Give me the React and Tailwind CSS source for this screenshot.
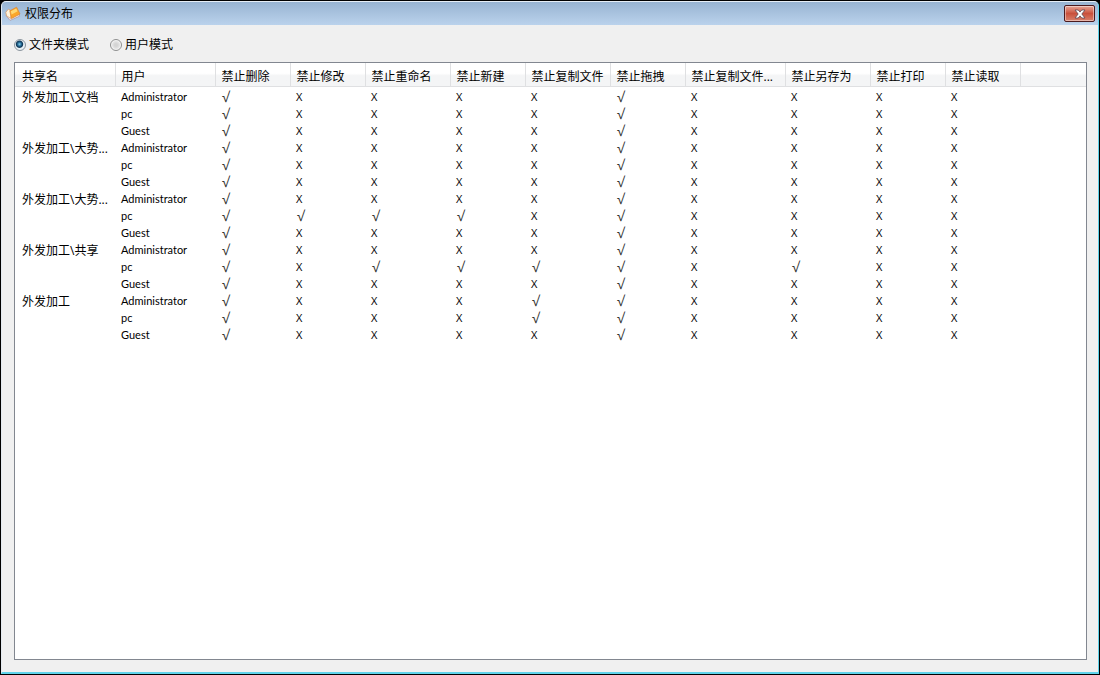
import { useState } from 'react';

const COLUMNS = [
  { label: '共享名', width: 'w-[100px]' },
  { label: '用户', width: 'w-[100px]' },
  { label: '禁止删除', width: 'w-[75px]' },
  { label: '禁止修改', width: 'w-[75px]' },
  { label: '禁止重命名', width: 'w-[85px]' },
  { label: '禁止新建', width: 'w-[75px]' },
  { label: '禁止复制文件', width: 'w-[85px]' },
  { label: '禁止拖拽', width: 'w-[75px]' },
  { label: '禁止复制文件...', width: 'w-[100px]' },
  { label: '禁止另存为', width: 'w-[85px]' },
  { label: '禁止打印', width: 'w-[75px]' },
  { label: '禁止读取', width: 'w-[75px]' },
];

// one flag per permission column, in header order
const ROWS = [
  ['外发加工\\文档', 'Administrator', '1000010000'],
  ['', 'pc', '1000010000'],
  ['', 'Guest', '1000010000'],
  ['外发加工\\大势...', 'Administrator', '1000010000'],
  ['', 'pc', '1000010000'],
  ['', 'Guest', '1000010000'],
  ['外发加工\\大势...', 'Administrator', '1000010000'],
  ['', 'pc', '1111010000'],
  ['', 'Guest', '1000010000'],
  ['外发加工\\共享', 'Administrator', '1000010000'],
  ['', 'pc', '1011110100'],
  ['', 'Guest', '1000010000'],
  ['外发加工', 'Administrator', '1000110000'],
  ['', 'pc', '1000110000'],
  ['', 'Guest', '1000010000'],
];

const MODES = [
  { id: 'folder', label: '文件夹模式' },
  { id: 'user', label: '用户模式' },
];

function AppIcon() {
  return (
    <svg className="w-4 h-4 shrink-0" viewBox="0 0 16 16" aria-hidden="true">
      <path d="M1 9.5 5 14.4 14.6 10.2 13 6Z" fill="#efe9ee" stroke="#a48f9c" strokeWidth=".7" />
      <path d="M.8 6.2 3.4 3.2 7 5.2 5.6 12.4 1.6 9.8Z" fill="#fff3dc" stroke="#d99a62" strokeWidth=".7" />
      <path d="M4.8 4.8 11.6 1.2 15 8 6.4 12.6Z" fill="#fba62a" stroke="#e0822a" strokeWidth=".7" />
      <path d="M5.8 5.2 11.2 2.4 12.6 5.2 6.6 8.4Z" fill="#ffd873" />
    </svg>
  );
}

function TitleBar({ title }) {
  return (
    <header className="flex items-start justify-between h-[23px] pl-[3px] pr-[3px] bg-linear-to-b from-[#98b4d2] to-[#bad2ec]">
      <div className="flex items-center gap-1 h-[23px]">
        <AppIcon />
        <h1 className="text-[12px] leading-4 text-black">{title}</h1>
      </div>
      <button
        type="button"
        aria-label="关闭"
        className="flex items-center justify-center w-[31px] h-[17px] mt-[3px] rounded-[2px] border border-[#4a1a1e] bg-linear-to-b from-[#e6a597] from-0% via-[#c9503c] via-50% to-[#d8806c] shadow-[inset_0_0_0_1px_#ffffff70]"
      >
        <svg className="w-3 h-[10px]" viewBox="0 0 12 10" aria-hidden="true">
          <path d="M1 1H4.2L6 3.1 7.8 1H11L7.8 5 11 9H7.8L6 6.9 4.2 9H1L4.2 5Z" fill="#fff" stroke="#5b4a55" strokeWidth=".8" />
        </svg>
      </button>
    </header>
  );
}

function ModePicker({ mode, onChange }) {
  return (
    <div className="flex items-center gap-[21px] h-4">
      {MODES.map((m) => (
        <label key={m.id} className="flex items-center gap-[3px] text-[12px] leading-4 text-black">
          <input
            type="radio"
            name="mode"
            checked={mode === m.id}
            onChange={() => onChange(m.id)}
            className="appearance-none w-3 h-3 rounded-full border border-[#8e8f8f] bg-[radial-gradient(circle,#d4d4d4_20%,#e4e4e4_50%,#fafafa_70%)] checked:border-[#8b959e] checked:bg-[radial-gradient(circle_at_45%_42%,#8fd4ee_0%,#2a719c_22%,#0f3553_40%,#e8f0f5_52%)]"
          />
          {m.label}
        </label>
      ))}
    </div>
  );
}

function PermissionTable() {
  return (
    <table className="w-full table-fixed border-collapse text-black">
      <thead>
        <tr className="h-[23px] bg-linear-to-b from-white from-45% to-[#f4f5f6] to-55%">
          {COLUMNS.map((col) => (
            <th
              key={col.label}
              className={`${col.width} p-0 pt-[6px] pl-[6px] first:pl-[7px] border-r border-b border-[#dfe0e2] text-left text-[12px] leading-4 font-normal whitespace-nowrap overflow-hidden`}
            >
              {col.label}
            </th>
          ))}
          <td className="border-b border-[#dfe0e2]" />
        </tr>
      </thead>
      <tbody className="before:block before:h-[2px]">
        {ROWS.map(([share, user, flags], i) => (
          <tr key={i} className="h-[17px]">
            <td className="p-0 pt-px pl-[7px] text-[12px] leading-4 whitespace-nowrap">{share}</td>
            <td className="p-0 pl-[6px] text-[11px] leading-4 font-['Lato',sans-serif]">{user}</td>
            {flags.split('').map((flag, j) =>
              flag === '1' ? (
                <td key={j} className="p-0 pl-[7px] text-[14px] leading-4 text-[#333]">√</td>
              ) : (
                <td key={j} className="p-0 pl-[6px] text-[11px] leading-4">X</td>
              )
            )}
            <td />
          </tr>
        ))}
      </tbody>
    </table>
  );
}

export default function App() {
  const [mode, setMode] = useState('folder');

  return (
    <div className="flex flex-col min-h-screen bg-black p-px font-['Open_Sans','Noto_Sans_CJK_SC',sans-serif]">
      <div className="flex flex-col flex-1 rounded-t-[5px] overflow-hidden border border-t-[#e6eef6] border-l-[#e4eaf0] border-r-[#5fd3ea] border-b-[#5fd3ea] border-b-2 bg-[#f0f0f0]">
        <TitleBar title="权限分布" />
        <main className="flex flex-col flex-1 pt-3 pl-3 pr-[11px] pb-3">
          <ModePicker mode={mode} onChange={setMode} />
          <section className="flex-1 mt-[9px] border border-[#828790] bg-white overflow-hidden">
            <PermissionTable />
          </section>
        </main>
      </div>
    </div>
  );
}
